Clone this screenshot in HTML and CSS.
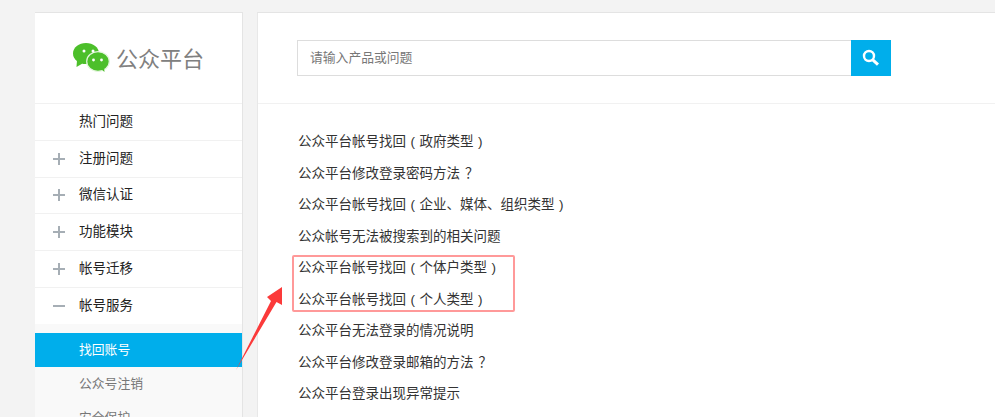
FILE: index.html
```html
<!DOCTYPE html>
<html lang="zh-CN">
<head>
  <meta charset="UTF-8" />
  <title>公众平台</title>
  <link rel="stylesheet" href="styles.css">
</head>
<body>
  <div class="wrap">
    <!-- Sidebar -->
    <aside class="sidebar">
      <div class="logo">
        <svg class="logo-icon" width="38" height="31" viewBox="0 0 38 31">
          <ellipse fill="#4cbf2a" cx="14" cy="11.500" rx="13" ry="10.500"/>
          <path fill="#4cbf2a" d="M5 18l-.5 7 6-3.500z"/>
          <ellipse fill="#4cbf2a" stroke="#e4f6de" stroke-width="1.200" cx="26" cy="19.500" rx="11.300" ry="9.800"/>
          <path fill="#4cbf2a" d="M29 27l3.500 3-.5-5z"/>
          <circle fill="#fff" cx="12" cy="9" r="1.500"/>
          <circle fill="#fff" cx="21" cy="9" r="1.500"/>
          <circle fill="#fff" cx="21.500" cy="18" r="1.400"/>
          <circle fill="#fff" cx="29.500" cy="18" r="1.400"/>
        </svg>
        <span class="logo-text">公众平台</span>
      </div>
      <ul class="menu">
        <li class="menu-item"><span class="sign none"></span><span class="menu-label">热门问题</span></li>
        <li class="menu-item"><span class="sign plus"></span><span class="menu-label">注册问题</span></li>
        <li class="menu-item"><span class="sign plus"></span><span class="menu-label">微信认证</span></li>
        <li class="menu-item"><span class="sign plus"></span><span class="menu-label">功能模块</span></li>
        <li class="menu-item"><span class="sign plus"></span><span class="menu-label">帐号迁移</span></li>
        <li class="menu-item"><span class="sign"></span><span class="menu-label">帐号服务</span></li>
      </ul>
      <ul class="submenu">
        <li class="active">找回账号</li>
        <li>公众号注销</li>
        <li>安全保护</li>
      </ul>
    </aside>

    <!-- Main -->
    <main class="content">
      <div class="search-bar">
        <div class="search">
          <input class="search-input" type="text" placeholder="请输入产品或问题">
          <button class="search-btn">
            <svg width="18" height="18" viewBox="0 0 18 18">
              <circle cx="7" cy="7" r="5" fill="none" stroke="#fff" stroke-width="2.400"/>
              <path d="M10.800 10.800L16 15.600" stroke="#fff" stroke-width="3" fill="none"/>
            </svg>
          </button>
        </div>
      </div>
      <ul class="faq">
        <li>公众平台帐号找回 ( 政府类型 )</li>
        <li>公众平台修改登录密码方法<span class="qmark">？</span></li>
        <li>公众平台帐号找回 ( 企业、媒体、组织类型 )</li>
        <li>公众帐号无法被搜索到的相关问题</li>
        <li>公众平台帐号找回 ( 个体户类型 )</li>
        <li>公众平台帐号找回 ( 个人类型 )</li>
        <li>公众平台无法登录的情况说明</li>
        <li>公众平台修改登录邮箱的方法<span class="qmark">？</span></li>
        <li>公众平台登录出现异常提示</li>
      </ul>
    </main>
  </div>

  <!-- Annotations on top of the screenshot -->
  <div class="mark-box"></div>
  <svg class="mark-arrow" width="50" height="88" viewBox="0 0 50 88">
    <path fill="#fb3a3a" d="M1 85L36 16 32 12 47 2 47 20 41.500 17z"/>
  </svg>
</body>
</html>
```

FILE: styles.css
```css
* {
  box-sizing: border-box;
}

html, body {
  margin: 0;
  padding: 0;
  height: 417px;
  overflow: hidden;
  background-color: #f3f3f3;
  color: #333;
  font-family: "Liberation Sans", "Noto Sans CJK SC", sans-serif;
  font-size: 13.500px;
}

ul {
  list-style: none;
  margin: 0;
  padding: 0;
}

.wrap {
  display: flex;
  gap: 14px;
  height: 417px;
  padding: 12px 0 0 35px;
}

.sidebar {
  width: 208px;
  flex-shrink: 0;
  background-color: #fff;
  border-top: 1px solid #e4e4e4;
  border-right: 1px solid #e4e4e4;
}

.logo {
  display: flex;
  align-items: center;
  gap: 6px;
  height: 90px;
  padding: 0 0 2px 37px;
}

.logo-text {
  font-size: 22px;
  color: #808080;
}

.menu-item {
  display: flex;
  align-items: center;
  height: 36.800px;
  border-top: 1px solid #f1f1f1;
}

.sign {
  position: relative;
  flex-shrink: 0;
  width: 12px;
  height: 2px;
  margin: 0 14px 0 18px;
  background-color: #a6aeb5;
}

.sign.none {
  background-color: transparent;
}

.sign.plus::after {
  content: "";
  position: absolute;
  left: 5px;
  top: -5px;
  width: 2px;
  height: 12px;
  background-color: #a6aeb5;
}

.menu-label {
  margin-bottom: 4px;
  color: #222;
}

.submenu {
  height: 100px;
  padding-top: 9px;
  background-color: #f9f9f9;
}

.submenu li {
  height: 34px;
  line-height: 33px;
  padding-left: 44px;
  font-size: 12.800px;
  color: #777;
}

.submenu li.active {
  background-color: #00aeeb;
  color: #fff;
}

.content {
  flex: 1;
  background-color: #fff;
  border-top: 1px solid #e4e4e4;
  border-left: 1px solid #e8e8e8;
}

.search-bar {
  height: 91px;
  padding-top: 27px;
  border-bottom: 1px solid #f1f1f1;
}

.search {
  display: flex;
  width: 594px;
  height: 36px;
  margin-left: 39px;
}

.search-input {
  flex: 1;
  height: 36px;
  padding: 0 12px 2px;
  border: 1px solid #ddd;
  border-right: none;
  font-family: inherit;
  font-size: 12.800px;
  outline: none;
}

.search-input::placeholder {
  color: #777;
}

.search-btn {
  display: flex;
  align-items: center;
  justify-content: center;
  width: 40px;
  height: 36px;
  padding: 0;
  border: none;
  background-color: #00aeeb;
}

.faq {
  padding: 22px 0 0 40px;
  word-spacing: 0.750px;
}

.faq li {
  height: 31.500px;
  line-height: 31.500px;
  color: #333;
}

.qmark {
  padding-left: 5px;
}

.mark-box {
  position: absolute;
  left: 292px;
  top: 255px;
  width: 223px;
  height: 57px;
  border: 2px solid #f99;
  border-radius: 2px;
}

.mark-arrow {
  position: absolute;
  left: 235px;
  top: 285px;
}
```
